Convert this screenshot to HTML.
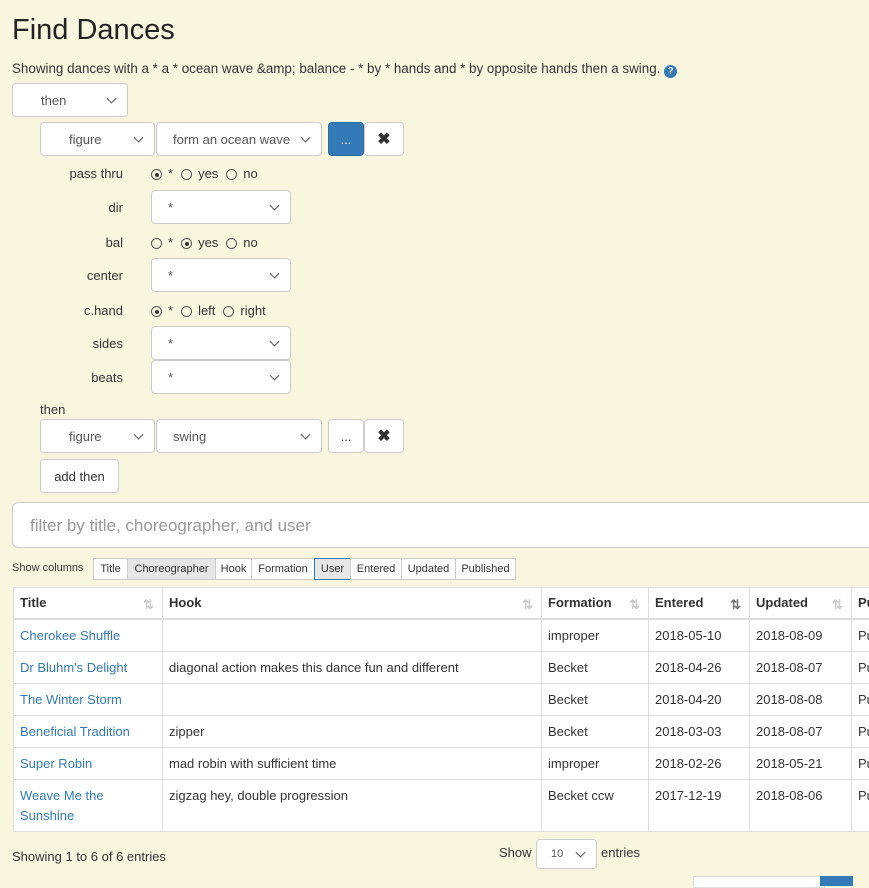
<!DOCTYPE html>
<html><head><meta charset="utf-8"><style>
body{margin:0;background:#f9f6e0;font-family:"Liberation Sans",sans-serif;color:#333;font-size:13px;width:869px;height:880px;overflow:hidden;position:relative}
.a{position:absolute}
.sel{position:absolute;background:#fff;border:1px solid #ccc;border-radius:4px;box-sizing:border-box;font-size:13px;color:#555;padding-left:28px;display:flex;align-items:center}
.sel:after{content:"";position:absolute;right:12px;top:50%;width:6px;height:6px;border-right:1.3px solid #555;border-bottom:1.3px solid #555;transform:translateY(-70%) rotate(45deg)}
.btn{position:absolute;box-sizing:border-box;border:1px solid #ccc;border-radius:4px;background:#fff;display:flex;align-items:center;justify-content:center;font-size:13px}
.lbl{position:absolute;text-align:right;font-size:13px}
.r{display:inline-block;width:11px;height:11px;border:1px solid #555;border-radius:50%;vertical-align:-2px;margin-right:6px;position:relative;box-sizing:border-box}
.r.on:after{content:"";position:absolute;left:2.5px;top:2.5px;width:4px;height:4px;background:#333;border-radius:50%}
.rad{position:absolute;font-size:13px}
.rad span{margin-right:8px}
table{position:absolute;left:13px;top:587px;border-collapse:collapse;background:#fff;font-size:13px;table-layout:fixed;width:880px}
td,th{border:1px solid #ddd;padding:0 6px;text-align:left;vertical-align:top;line-height:20px;white-space:nowrap;overflow:hidden}
th{height:30px;vertical-align:middle;border-bottom:2px solid #ddd;font-weight:bold;position:relative}
td{padding-top:6px;padding-bottom:5px}
a{color:#337ab7;text-decoration:none}
.srt{position:absolute;right:8px;top:7px;color:#ccc;font-size:13px}
.cb{position:absolute;top:558px;height:22px;border:1px solid #ccc;box-sizing:border-box;background:#fff;font-size:11px;line-height:20px;text-align:center}
</style></head><body>
<div class="a" style="left:12px;top:14px;font-size:29px;color:#222">Find Dances</div>
<div class="a" style="left:12px;top:61px;font-size:13.4px">Showing dances with a * a * ocean wave &amp;amp; balance - * by * hands and * by opposite hands then a swing. <span style="display:inline-block;width:13px;height:13px;border-radius:50%;background:#337ab7;color:#fff;font-size:10px;font-weight:bold;text-align:center;line-height:13px;vertical-align:-1px">?</span></div>
<div class="sel" style="left:12px;top:83px;width:116px;height:34px">then</div>
<div class="sel" style="left:40px;top:122px;width:115px;height:34px">figure</div>
<div class="sel" style="left:156px;top:122px;width:166px;height:34px;padding-left:16px">form an ocean wave</div>
<div class="btn" style="left:328px;top:122px;width:36px;height:34px;background:#337ab7;border-color:#2e6da4;color:#fff">...</div>
<div class="btn" style="left:364px;top:122px;width:40px;height:34px;font-weight:bold;font-size:16px">✖</div>
<div class="lbl" style="left:40px;width:83px;top:166px">pass thru</div>
<div class="rad" style="left:151px;top:166px"><i class="r on"></i><span>*</span><i class="r"></i><span>yes</span><i class="r"></i><span>no</span></div>
<div class="lbl" style="left:40px;width:83px;top:200px">dir</div>
<div class="sel" style="left:151px;top:190px;width:140px;height:34px;padding-left:16px">*</div>
<div class="lbl" style="left:40px;width:83px;top:235px">bal</div>
<div class="rad" style="left:151px;top:235px"><i class="r"></i><span>*</span><i class="r on"></i><span>yes</span><i class="r"></i><span>no</span></div>
<div class="lbl" style="left:40px;width:83px;top:268px">center</div>
<div class="sel" style="left:151px;top:258px;width:140px;height:34px;padding-left:16px">*</div>
<div class="lbl" style="left:40px;width:83px;top:303px">c.hand</div>
<div class="rad" style="left:151px;top:303px"><i class="r on"></i><span>*</span><i class="r"></i><span>left</span><i class="r"></i><span>right</span></div>
<div class="lbl" style="left:40px;width:83px;top:336px">sides</div>
<div class="sel" style="left:151px;top:326px;width:140px;height:34px;padding-left:16px">*</div>
<div class="lbl" style="left:40px;width:83px;top:370px">beats</div>
<div class="sel" style="left:151px;top:360px;width:140px;height:34px;padding-left:16px">*</div>
<div class="a" style="left:40px;top:402px">then</div>
<div class="sel" style="left:40px;top:419px;width:115px;height:34px">figure</div>
<div class="sel" style="left:156px;top:419px;width:166px;height:34px;padding-left:16px">swing</div>
<div class="btn" style="left:328px;top:419px;width:36px;height:34px">...</div>
<div class="btn" style="left:364px;top:419px;width:40px;height:34px;font-weight:bold;font-size:16px">✖</div>
<div class="btn" style="left:40px;top:459px;width:79px;height:34px">add then</div>
<div class="a" style="left:12px;top:502px;width:870px;height:46px;box-sizing:border-box;border:1px solid #ccc;border-radius:6px;background:#fff;font-size:17px;color:#999;padding:13px 0 0 17px">filter by title, choreographer, and user</div>
<div class="a" style="left:12px;top:562px;font-size:11px">Show columns</div>
<div class="cb" style="left:93px;width:35px">Title</div>
<div class="cb" style="left:127px;width:89px;background:#e6e6e6">Choreographer</div>
<div class="cb" style="left:215px;width:37px">Hook</div>
<div class="cb" style="left:251px;width:64px">Formation</div>
<div class="cb" style="left:314px;width:37px;background:#e6e6e6;border-color:#337ab7">User</div>
<div class="cb" style="left:350px;width:52px">Entered</div>
<div class="cb" style="left:401px;width:55px">Updated</div>
<div class="cb" style="left:455px;width:61px">Published</div>
<table>
<colgroup><col style="width:149px"><col style="width:379px"><col style="width:107px"><col style="width:101px"><col style="width:102px"><col style="width:42px"></colgroup>
<tr><th>Title<span class="srt">⇅</span></th><th>Hook<span class="srt">⇅</span></th><th>Formation<span class="srt">⇅</span></th><th>Entered<span class="srt" style="color:#777">⇅</span></th><th>Updated<span class="srt">⇅</span></th><th>Pu</th></tr>
<tr><td><a>Cherokee Shuffle</a></td><td></td><td>improper</td><td>2018-05-10</td><td>2018-08-09</td><td>Pu</td></tr>
<tr><td><a>Dr Bluhm's Delight</a></td><td>diagonal action makes this dance fun and different</td><td>Becket</td><td>2018-04-26</td><td>2018-08-07</td><td>Pu</td></tr>
<tr><td><a>The Winter Storm</a></td><td></td><td>Becket</td><td>2018-04-20</td><td>2018-08-08</td><td>Pu</td></tr>
<tr><td><a>Beneficial Tradition</a></td><td>zipper</td><td>Becket</td><td>2018-03-03</td><td>2018-08-07</td><td>Pu</td></tr>
<tr><td><a>Super Robin</a></td><td>mad robin with sufficient time</td><td>improper</td><td>2018-02-26</td><td>2018-05-21</td><td>Pu</td></tr>
<tr><td><a>Weave Me the<br>Sunshine</a></td><td>zigzag hey, double progression</td><td>Becket ccw</td><td>2017-12-19</td><td>2018-08-06</td><td>Pu</td></tr>
</table>
<div class="a" style="left:12px;top:849px">Showing 1 to 6 of 6 entries</div>
<div class="a" style="left:499px;top:845px">Show</div>
<div class="sel" style="left:536px;top:839px;width:61px;height:30px;padding-left:14px;font-size:11px">10</div>
<div class="a" style="left:601px;top:845px">entries</div>
<div class="a" style="left:693px;top:876px;width:130px;height:10px;background:#fff;border:1px solid #ddd"></div>
<div class="a" style="left:820px;top:876px;width:33px;height:10px;background:#337ab7"></div>
</body></html>
